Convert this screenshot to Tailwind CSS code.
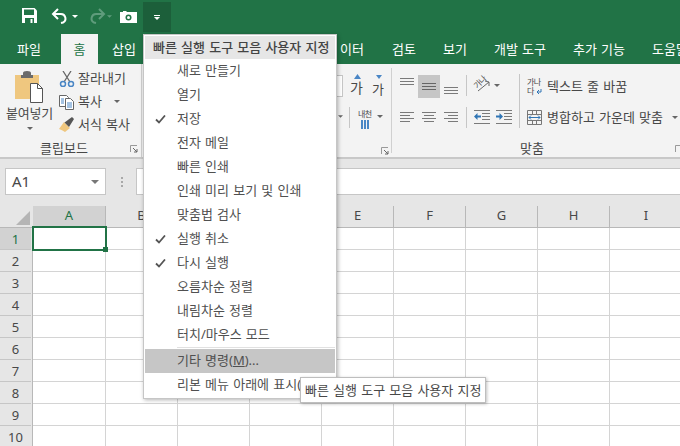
<!DOCTYPE html>
<html lang="ko">
<head>
<meta charset="utf-8">
<script src="https://cdn.jsdelivr.net/npm/@tailwindcss/browser@4"></script>
</head>
<body class="m-0">
<div class="relative w-[680px] h-[446px] overflow-hidden bg-white text-[13px] text-[#484848] [font-family:'Noto_Sans','Noto_Sans_CJK_KR',sans-serif] [word-spacing:0.8px]">

  <!-- quick access -->
  <div class="h-[32px] bg-[#217346] flex items-start">
    <svg class="ml-[22px] mt-[8px]" width="15" height="15" viewBox="0 0 15 15"><path d="M0 0h12.500L15 2.500V15H0z" fill="#fff"/><path d="M2 1.500h10v5.500H2z" fill="#217346"/><path d="M3 10h9v5H3z" fill="#217346"/><path d="M8.500 11h2v4h-2z" fill="#fff"/></svg>
    <svg class="ml-[14px] mt-[8px]" width="20" height="16" viewBox="0 0 20 16" fill="none" stroke="#fff" stroke-width="2"><path d="M7 1 2 6l5 5"/><path d="M2 6h8a4.500 4.500 0 0 1 2 8.500L10 15"/></svg>
    <svg class="ml-[1px] mt-[15px]" width="6" height="3" viewBox="0 0 6 3"><path d="M0 0h6L3 3z" fill="#fff"/></svg>
    <svg class="ml-[8px] mt-[8px]" width="20" height="16" viewBox="0 0 20 16" fill="none" stroke="#5f9c7c" stroke-width="2"><path d="m13 1 5 5-5 5"/><path d="M18 6h-8a4.500 4.500 0 0 0-2 8.500l2 .5"/></svg>
    <svg class="ml-[1px] mt-[15px]" width="5" height="3" viewBox="0 0 6 3"><path d="M0 0h6L3 3z" fill="#5f9c7c"/></svg>
    <svg class="ml-[8px] mt-[10px]" width="17" height="13" viewBox="0 0 17 13"><path d="M0 2h3V1h3l1 1h10v11H0z" fill="#fff"/><circle cx="8.500" cy="7.500" r="3" fill="#217346"/><circle cx="8.500" cy="7.500" r="1.500" fill="#fff"/></svg>
    <div class="ml-[6px] mt-[2px] w-[28px] h-[30px] bg-[#1c5f3a] flex flex-col items-center justify-center gap-[1px]">
      <div class="w-[6px] h-[1px] bg-white"></div>
      <svg width="6" height="3" viewBox="0 0 6 3"><path d="M0 0h6L3 3z" fill="#fff"/></svg>
    </div>
  </div>

  <!-- tabs -->
  <div class="h-[32px] bg-[#217346] flex text-white items-end leading-[30px] whitespace-nowrap [&>div]:shrink-0">
    <div class="w-[61px] h-[30px] text-center pr-[3px]">파일</div>
    <div class="w-[37px] h-[30px] text-center bg-[#f3f3f3] text-[#217346]">홈</div>
    <div class="w-[52px] h-[30px] text-center">삽입</div>
    <div class="w-[165px] h-[30px]"></div>
    <div class="w-[49px] h-[30px] text-right">이터</div>
    <div class="w-[52px] h-[30px] text-right">검토</div>
    <div class="w-[51px] h-[30px] text-right">보기</div>
    <div class="w-[79px] h-[30px] text-right">개발 도구</div>
    <div class="w-[79px] h-[30px] text-right">추가 기능</div>
    <div class="w-[40px] h-[30px] ml-[27px]">도움말</div>
  </div>

  <!-- ribbon -->
  <div class="h-[95px] bg-[#f3f3f3] border-b-2 border-[#c8c8c8] flex">
    <!-- clipboard -->
    <div class="w-[142px] shrink-0 flex flex-col border-r border-[#d0d0d0]">
      <div class="h-[73px] flex">
        <div class="w-[59px] flex flex-col items-center">
          <svg class="mt-[7px]" width="30" height="32" viewBox="0 0 30 32"><path d="M0 4h24v24H0z" fill="#efc77f"/><path d="M6 4h2V2q0-2 4-2t4 2v2h2v3H6z" fill="#6b6b6b"/><path d="M15.500 12.500h7l5 5v14h-12z" fill="#fff" stroke="#555"/><path d="M22.500 12.500v5h5" fill="none" stroke="#555"/></svg>
          <div class="mt-[1px] leading-[18px] whitespace-nowrap tracking-[-0.2px]">붙여넣기</div>
          <svg class="mt-[5px]" width="6" height="3" viewBox="0 0 6 3"><path d="M0 0h6L3 3z" fill="#666"/></svg>
        </div>
        <div class="pt-[3px] flex flex-col">
          <div class="h-[23px] flex items-center gap-[3px] whitespace-nowrap">
            <svg width="16" height="16" viewBox="0 0 16 16" fill="none"><path d="M4 0l7 11M12 0 5 11" stroke="#666" stroke-width="1.300"/><circle cx="4" cy="13" r="2.500" stroke="#4a86c5" stroke-width="1.500"/><circle cx="12" cy="13" r="2.500" stroke="#4a86c5" stroke-width="1.500"/></svg>
            <span>잘라내기</span>
          </div>
          <div class="h-[23px] flex items-center gap-[3px] whitespace-nowrap">
            <svg width="16" height="16" viewBox="0 0 16 16" fill="none"><path d="M.5 1.500h7l2 2v9h-9z" fill="#fff" stroke="#666"/><path d="M6.500 4.500h5l3 3v8h-8z" fill="#fff" stroke="#666"/><path d="M8 9h5M8 11h5M8 13h5M2 5h3M2 7h3M2 9h3" stroke="#4a86c5"/></svg>
            <span>복사</span>
            <svg class="ml-[9px]" width="6" height="3" viewBox="0 0 6 3"><path d="M0 0h6L3 3z" fill="#666"/></svg>
          </div>
          <div class="h-[23px] flex items-center gap-[3px] whitespace-nowrap">
            <svg width="16" height="16" viewBox="0 0 16 16"><path d="M0 12 5 5l6 6-5 4q-3-2-6-3z" fill="#efc77f"/><path d="M5.500 5.500 7 7l2 2 1 1 5-8-2-2z" fill="#555"/></svg>
            <span>서식 복사</span>
          </div>
        </div>
      </div>
      <div class="relative h-[20px] leading-[22px] pl-[40px]">
        클립보드
        <svg class="absolute right-[3px] top-[8px]" width="8" height="8" viewBox="0 0 8 8" fill="none"><path d="M.5 7V.5H7" stroke="#999"/><path d="M3 3l4 4M7 4v3H4" stroke="#666"/></svg>
      </div>
    </div>

    <!-- hidden by menu -->
    <div class="w-[195px] shrink-0"></div>

    <!-- font (rest) -->
    <div class="relative w-[55px] shrink-0 border-r border-[#d0d0d0] my-[4px]">
      <div class="absolute left-0 top-[7px] w-[6px] h-[22px] bg-white border border-l-0 border-[#c6c6c6]"></div>
      <span class="absolute left-[13px] top-[11px] text-[14px] leading-[18px]">가</span>
      <svg class="absolute left-[17px] top-[6px]" width="7" height="5" viewBox="0 0 7 5"><path d="M0 5 3.500 0 7 5z" fill="#4a86c5"/></svg>
      <span class="absolute left-[35px] top-[12px] text-[13px] leading-[18px]">가</span>
      <svg class="absolute left-[39px] top-[7px]" width="6" height="4" viewBox="0 0 6 4"><path d="M0 0h6L3 4z" fill="#4a86c5"/></svg>
      <div class="absolute left-[12px] top-[39px] w-px h-[21px] bg-[#c6c6c6]"></div>
      <svg class="absolute left-[1px] top-[47px]" width="5" height="3" viewBox="0 0 6 3"><path d="M0 0h6L3 3z" fill="#666"/></svg>
      <span class="absolute left-[21px] top-[40px] text-[8px] leading-[12px] tracking-[-0.5px]">내천</span>
      <svg class="absolute left-[23px] top-[52px]" width="10" height="9" viewBox="0 0 10 9" fill="none" stroke="#4a86c5" stroke-width="2"><path d="M2 0v9M5 0v9M8 0v9"/></svg>
      <svg class="absolute left-[40px] top-[47px]" width="6" height="3" viewBox="0 0 6 3"><path d="M0 0h6L3 3z" fill="#666"/></svg>
      <svg class="absolute left-[44px] top-[79px]" width="8" height="8" viewBox="0 0 8 8" fill="none"><path d="M.5 7V.5H7" stroke="#999"/><path d="M3 3l4 4M7 4v3H4" stroke="#666"/></svg>
    </div>

    <!-- alignment -->
    <div class="w-[288px] shrink-0 flex flex-col">
      <div class="h-[73px] flex">
        <div class="w-[128px] shrink-0 mt-[10px] mb-[9px] border-r border-[#c6c6c6] flex flex-col gap-[8px] pt-[1px]">
          <div class="h-[23px] flex">
            <svg class="ml-[8px]" width="14" height="23" viewBox="0 0 14 23"><path d="M0 3h14v1H0zM0 6h14v1H0zM0 9h14v1H0z" fill="#7a7a7a"/></svg>
            <div class="ml-[4px] w-[22px] h-[23px] bg-[#c6c6c6] flex justify-center items-center">
              <svg width="14" height="7" viewBox="0 0 14 7"><path d="M0 0h14v1H0zM0 3h14v1H0zM0 6h14v1H0z" fill="#666"/></svg>
            </div>
            <svg class="ml-[4px]" width="14" height="23" viewBox="0 0 14 23"><path d="M0 12h14v1H0zM0 15h14v1H0zM0 18h14v1H0z" fill="#7a7a7a"/></svg>
            <div class="ml-[8px] w-px h-[21px] bg-[#c6c6c6]"></div>
            <div class="ml-[7px] w-[17px] h-[20px] relative">
              <span class="absolute left-[-1px] top-[2px] text-[8px] leading-[10px] tracking-[-0.5px] -rotate-45 whitespace-nowrap">가나</span>
              <svg class="absolute left-0 top-[2px]" width="17" height="16" viewBox="0 0 17 16" fill="none" stroke="#666"><path d="M4 14 15 5M11 4l4 1v4"/></svg>
            </div>
            <svg class="ml-[3px] mt-[9px]" width="6" height="3" viewBox="0 0 6 3"><path d="M0 0h6L3 3z" fill="#666"/></svg>
          </div>
          <div class="h-[23px] flex items-center">
            <svg class="ml-[8px]" width="14" height="10" viewBox="0 0 14 10"><path d="M0 0h14v1H0zM0 3h10v1H0zM0 6h14v1H0zM0 9h10v1H0z" fill="#7a7a7a"/></svg>
            <svg class="ml-[8px]" width="14" height="10" viewBox="0 0 14 10"><path d="M0 0h14v1H0zM2 3h10v1H2zM0 6h14v1H0zM2 9h10v1H2z" fill="#7a7a7a"/></svg>
            <svg class="ml-[8px]" width="14" height="10" viewBox="0 0 14 10"><path d="M0 0h14v1H0zM4 3h10v1H4zM0 6h14v1H0zM4 9h10v1H4z" fill="#7a7a7a"/></svg>
            <div class="ml-[8px] w-px h-[21px] bg-[#c6c6c6]"></div>
            <svg class="ml-[7px]" width="16" height="14" viewBox="0 0 16 14"><path d="M0 0h16v1H0zM0 13h16v1H0zM8 3h8v1H8zM8 6h8v1H8zM8 9h8v1H8z" fill="#7a7a7a"/><path d="M0 6.500 3.500 3v2.500H7v2H3.500V10z" fill="#2f75b5"/></svg>
            <svg class="ml-[6px]" width="16" height="14" viewBox="0 0 16 14"><path d="M0 0h16v1H0zM0 13h16v1H0zM8 3h8v1H8zM8 6h8v1H8zM8 9h8v1H8z" fill="#7a7a7a"/><path d="M7 6.500 3.500 3v2.500H0v2h3.500V10z" fill="#2f75b5"/></svg>
          </div>
        </div>
        <div class="pt-[11px] flex flex-col gap-[8px] whitespace-nowrap">
          <div class="h-[23px] flex items-center">
            <div class="ml-[8px] w-[14px] h-[18px] relative">
              <span class="absolute -left-[1px] -top-[1px] text-[8px] leading-[9px] tracking-[-0.5px] whitespace-nowrap">가나</span>
              <span class="absolute -left-[1px] top-[8px] text-[8px] leading-[9px]">다</span>
              <svg class="absolute left-[8px] top-[11px]" width="6" height="5" viewBox="0 0 6 5" fill="none" stroke="#2f75b5"><path d="M5 0v3H1M3 1 1 3l2 2"/></svg>
            </div>
            <span class="ml-[5px]">텍스트 줄 바꿈</span>
          </div>
          <div class="h-[23px] flex items-center">
            <svg class="ml-[7px]" width="15" height="15" viewBox="0 0 15 15" fill="none"><path d="M.5.500h14v14H.5zM.5 4.500h14M.5 10.500h14" stroke="#777"/><path d="M2 7.500h11M4 5.500l-2 2 2 2M11 5.500l2 2-2 2" stroke="#2f75b5"/><path d="M5.500 1v3M9.500 1v3M5.500 11v3M9.500 11v3" stroke="#777"/></svg>
            <span class="ml-[5px]">병합하고 가운데 맞춤</span>
            <svg class="ml-[9px]" width="6" height="3" viewBox="0 0 6 3"><path d="M0 0h6L3 3z" fill="#666"/></svg>
          </div>
        </div>
      </div>
      <div class="relative h-[20px] leading-[22px] pl-[128px]">
        맞춤
        <svg class="absolute left-[283px] top-[8px]" width="8" height="8" viewBox="0 0 8 8" fill="none"><path d="M.5 7V.5H7" stroke="#999"/></svg>
      </div>
    </div>
  </div>

  <!-- formula bar -->
  <div class="h-[47px] bg-[#e6e6e6] flex pt-[9px]">
    <div class="ml-[5px] w-[101px] h-[27px] bg-white border border-[#c6c6c6] flex items-center justify-between pl-[6px] pr-[6px] text-[15px]">
      <span>A1</span>
      <svg width="8" height="4" viewBox="0 0 8 4"><path d="M0 0h8L4 4z" fill="#777"/></svg>
    </div>
    <div class="ml-[15px] mt-[9px] flex flex-col gap-[2px]">
      <div class="w-[2px] h-[2px] bg-[#a8a8a8]"></div>
      <div class="w-[2px] h-[2px] bg-[#a8a8a8]"></div>
      <div class="w-[2px] h-[2px] bg-[#a8a8a8]"></div>
    </div>
    <div class="ml-[13px] flex-1 h-[27px] bg-white border-y border-l border-[#c6c6c6]"></div>
  </div>

  <!-- column headers -->
  <div class="h-[22px] bg-[#e6e6e6] flex text-[13px] leading-[19px] text-center border-b border-[#b8b8b8] [&>div]:shrink-0">
    <div class="w-[33px] relative">
      <svg class="absolute left-[16px] top-[5px]" width="14" height="14" viewBox="0 0 14 14"><path d="M14 0v14H0z" fill="#b5b5b5"/></svg>
    </div>
    <div class="w-[73px] bg-[#d2d2d2] text-[#217346] border-r border-[#b8b8b8]">A</div>
    <div class="w-[72px] border-r border-[#b8b8b8]">B</div>
    <div class="w-[72px] border-r border-[#b8b8b8]">C</div>
    <div class="w-[72px] border-r border-[#b8b8b8]">D</div>
    <div class="w-[72px] border-r border-[#b8b8b8]">E</div>
    <div class="w-[72px] border-r border-[#b8b8b8]">F</div>
    <div class="w-[72px] border-r border-[#b8b8b8]">G</div>
    <div class="w-[72px] border-r border-[#b8b8b8]">H</div>
    <div class="w-[72px]">I</div>
  </div>

  <!-- sheet -->
  <div class="flex">
    <div class="w-[33px] shrink-0 flex flex-col text-center text-[13px] leading-[22px] bg-[#e6e6e6] border-r border-[#b8b8b8] [&>div]:h-[22px] [&>div]:border-b [&>div]:border-[#c6c6c6] pr-[1px]">
      <div class="bg-[#d2d2d2] text-[#217346]">1</div>
      <div>2</div><div>3</div><div>4</div><div>5</div><div>6</div><div>7</div><div>8</div><div>9</div><div>10</div>
    </div>
    <div class="grid grid-cols-[73px_repeat(8,72px)] auto-rows-[22px] [&>i]:border-r [&>i]:border-b [&>i]:border-[#d4d4d4]">
      <i></i><i></i><i></i><i></i><i></i><i></i><i></i><i></i><i></i>
      <i></i><i></i><i></i><i></i><i></i><i></i><i></i><i></i><i></i>
      <i></i><i></i><i></i><i></i><i></i><i></i><i></i><i></i><i></i>
      <i></i><i></i><i></i><i></i><i></i><i></i><i></i><i></i><i></i>
      <i></i><i></i><i></i><i></i><i></i><i></i><i></i><i></i><i></i>
      <i></i><i></i><i></i><i></i><i></i><i></i><i></i><i></i><i></i>
      <i></i><i></i><i></i><i></i><i></i><i></i><i></i><i></i><i></i>
      <i></i><i></i><i></i><i></i><i></i><i></i><i></i><i></i><i></i>
      <i></i><i></i><i></i><i></i><i></i><i></i><i></i><i></i><i></i>
      <i></i><i></i><i></i><i></i><i></i><i></i><i></i><i></i><i></i>
    </div>
  </div>

  <!-- selection -->
  <div class="absolute left-[32px] top-[226px] w-[75px] h-[25px] border-2 border-[#217346]"></div>
  <div class="absolute left-[103px] top-[247px] w-[5px] h-[5px] bg-[#217346]"></div>

  <!-- dropdown menu -->
  <div class="absolute left-[143px] top-[34px] w-[194px] h-[365px] bg-white border border-[#c6c6c6] shadow-[1px_1px_4px_rgba(0,0,0,0.3)] p-[1px] whitespace-nowrap leading-[22px] text-[#505050]">
    <div class="h-[23px] bg-[#e6e6e6] pl-[8px] leading-[22px] text-[#444] font-medium">빠른 실행 도구 모음 사용자 지정</div>
    <div class="h-[24px] pl-[32px]">새로 만들기</div>
    <div class="h-[24px] pl-[32px]">열기</div>
    <div class="h-[24px] flex items-start">
      <svg class="ml-[10px] mt-[8px]" width="11" height="9" viewBox="0 0 11 9" fill="none"><path d="m1 4.500 3 3 6-7" stroke="#555" stroke-width="1.800"/></svg>
      <span class="ml-[11px]">저장</span>
    </div>
    <div class="h-[24px] pl-[32px]">전자 메일</div>
    <div class="h-[24px] pl-[32px]">빠른 인쇄</div>
    <div class="h-[24px] pl-[32px]">인쇄 미리 보기 및 인쇄</div>
    <div class="h-[24px] pl-[32px]">맞춤법 검사</div>
    <div class="h-[24px] flex items-start">
      <svg class="ml-[10px] mt-[8px]" width="11" height="9" viewBox="0 0 11 9" fill="none"><path d="m1 4.500 3 3 6-7" stroke="#555" stroke-width="1.800"/></svg>
      <span class="ml-[11px]">실행 취소</span>
    </div>
    <div class="h-[24px] flex items-start">
      <svg class="ml-[10px] mt-[8px]" width="11" height="9" viewBox="0 0 11 9" fill="none"><path d="m1 4.500 3 3 6-7" stroke="#555" stroke-width="1.800"/></svg>
      <span class="ml-[11px]">다시 실행</span>
    </div>
    <div class="h-[24px] pl-[32px]">오름차순 정렬</div>
    <div class="h-[24px] pl-[32px]">내림차순 정렬</div>
    <div class="h-[24px] pl-[32px]">터치/마우스 모드</div>
    <div class="h-[2px]"><div class="ml-[32px] h-px bg-[#e1e1e1]"></div></div>
    <div class="h-[24px] pl-[32px] bg-[#c6c6c6]">기타 명령(<span class="underline">M</span>)...</div>
    <div class="h-[24px] pl-[32px]">리본 메뉴 아래에 표시(B)</div>
  </div>

  <!-- tooltip -->
  <div class="absolute left-[300px] top-[377px] w-[186px] h-[26px] bg-white border border-[#bebebe] shadow-[1px_1px_3px_rgba(0,0,0,0.25)] pl-[4px] leading-[24px] whitespace-nowrap">빠른 실행 도구 모음 사용자 지정</div>
</div>
</body>
</html>
